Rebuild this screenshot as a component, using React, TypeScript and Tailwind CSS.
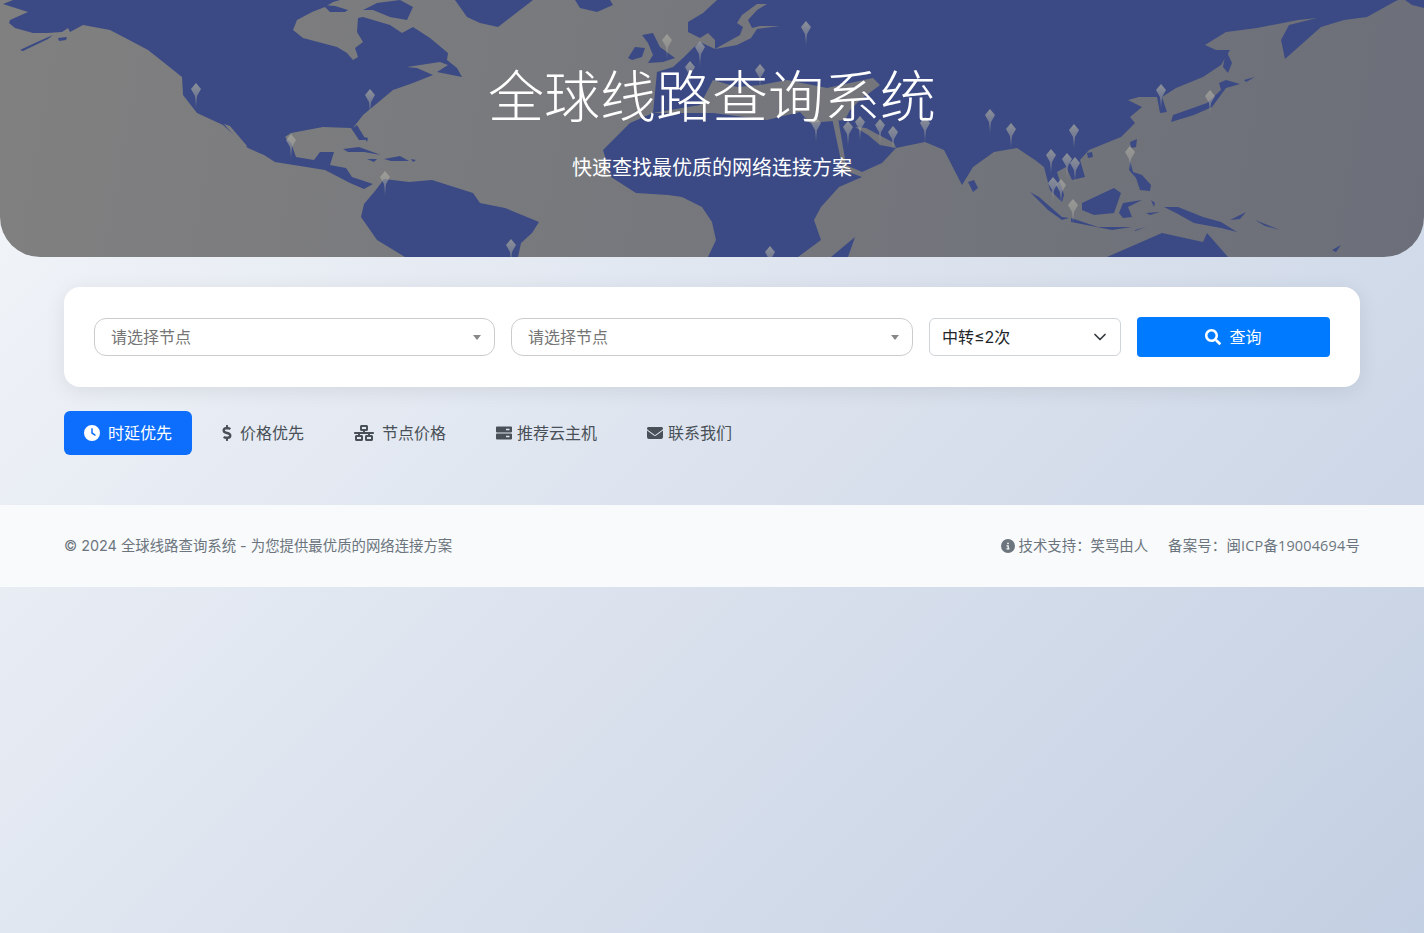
import React from 'react';
import { FaClock, FaEnvelope, FaNetworkWired, FaCircleInfo } from 'react-icons/fa6';
import { FaDollarSign, FaSearch } from 'react-icons/fa';

const pins = [
  [196, 89], [370, 95], [291, 140], [385, 177], [511, 245], [667, 40], [700, 47], [690, 67],
  [806, 27], [760, 70], [816, 123], [848, 127], [860, 122], [880, 125], [893, 132], [925, 123],
  [990, 115], [1011, 129], [1074, 130], [1051, 155], [1067, 159], [1075, 163], [1053, 183], [1061, 185],
  [1073, 205], [1130, 152], [1161, 90], [1210, 96], [770, 252],
];

// land outlines in page pixels
const land = [
  // north america
  '13,0 3,4 28,12 10,20 9,23 15,28 33,33 47,33 62,32 68,28 70,32 83,25 110,30 133,42 148,50 167,65 182,77 183,95 197,113 223,125 248,148 264,155 275,162 300,166 325,170 350,183 364,189 373,184 352,177 346,168 330,165 334,152 320,152 314,160 296,157 291,143 285,137 291,133 323,127 351,128 359,140 366,140 357,125 353,128 363,115 375,105 393,90 413,83 433,75 417,68 407,67 440,62 448,65 437,72 462,77 457,68 447,60 448,53 430,38 413,27 402,33 390,25 363,17 358,18 357,32 363,42 355,48 358,57 353,60 347,53 337,47 303,38 293,30 297,20 312,12 325,7 333,2 340,0',
  // arctic islands, alaska strip
  '363,10 377,3 400,0 413,7 407,20 390,17 373,10',
  '323,5 335,6 348,10 345,12 330,12',
  '20,50 37,42 53,35 48,39 23,51',
  '58,38 67,37 66,40 59,41',
  // greenland, iceland
  '455,0 467,17 480,23 498,27 533,0',
  '575,0 580,8 597,12 613,5 610,0',
  // south america
  '375,191 384,179 409,182 432,180 473,193 480,203 505,208 539,222 532,233 521,243 518,257 405,257 377,240 361,217 364,204',
  // caribbean
  '343,149 359,147 381,155 364,152 348,152',
  '384,159 400,156 409,161 391,161',
  '367,159 377,159 374,162',
  '411,159 416,160 413,162',
  '364,137 368,138 367,142',
  // uk and ireland
  '628,58 635,47 645,48 642,57 632,60',
  '642,35 653,33 660,47 675,58 663,62 648,63 653,55 648,43',
  // eurasia and africa
  '717,0 703,13 688,22 688,32 700,38 708,33 715,40 715,49 700,42 693,48 683,58 673,67 657,72 653,113 630,123 603,150 611,177 636,193 668,195 682,197 702,207 712,222 716,240 708,257 798,257 821,240 814,220 821,207 839,187 862,177 862,172 882,163 896,148 925,142 944,150 962,185 973,167 994,152 1017,148 1035,160 1044,167 1050,190 1062,202 1064,195 1057,172 1066,167 1072,180 1085,177 1080,160 1089,150 1121,137 1135,123 1130,117 1142,107 1128,100 1139,97 1157,97 1160,113 1167,112 1162,97 1176,88 1203,77 1221,65 1230,50 1216,50 1205,45 1226,32 1257,28 1298,20 1317,18 1289,25 1281,40 1285,59 1303,43 1321,27 1344,20 1367,17 1394,2 1398,0',
  '1405,0 1424,0 1424,8 1412,5',
  // madagascar, sri lanka, hainan, taiwan
  '831,257 855,237 848,257',
  '968,182 974,180 978,188 973,192',
  '1087,153 1092,152 1093,157 1088,158',
  '1130,142 1137,139 1136,147 1131,148',
  // japan, sakhalin, kurils
  '1171,122 1173,115 1207,103 1221,90 1219,83 1226,80 1240,84 1226,88 1212,107 1194,115',
  '1226,50 1232,63 1228,73 1223,67',
  '1244,80 1255,77 1246,82',
  // philippines
  '1130,160 1133,172 1142,175 1151,185 1150,191 1140,190 1136,178 1129,170',
  // indonesia
  '1030,192 1039,197 1062,217 1069,218 1062,220 1048,210',
  '1071,218 1098,227 1132,227 1112,230 1071,222',
  '1135,230 1146,227 1135,231',
  '1082,203 1114,188 1121,193 1114,213 1094,215 1082,210',
  '1119,213 1123,203 1142,200 1128,207 1132,217 1123,218',
  '1151,200 1155,203 1154,207',
  '1146,213 1160,212 1150,215',
  // new guinea, new britain
  '1164,207 1178,207 1203,217 1221,222 1237,232 1221,228 1194,223 1176,213',
  '1230,220 1246,212 1240,219',
  '1255,220 1280,230 1265,226',
  // australia, new zealand
  '1107,257 1162,233 1203,242 1207,233 1228,257',
  '1332,250 1341,245 1336,252',
];

// water that cuts into the land
const seas = [
  '224,124 230,126 247,146 243,146',
  '767,4 757,4 742,15 737,23 743,27 740,35 715,49 737,45 751,38 757,29 780,26 760,26 752,28 748,20 757,10',
  '653,113 670,113 713,113 767,120 800,112 810,123 845,120 850,110 860,100 880,85 873,78 827,88 787,80 760,85 737,87 713,80 700,105',
  '832,118 838,118 846,165 862,172 862,177 843,170',
  '855,127 866,128 894,143 896,148 880,145 868,135',
];

function HeroMap() {
  return (
    <svg viewBox="0 0 1424 257" className="absolute inset-0 w-full h-full">
      <defs>
        <linearGradient id="sea" gradientUnits="userSpaceOnUse" x1="0" y1="0" x2="1424" y2="257">
          <stop offset="0" stopColor="#808080" />
          <stop offset="1" stopColor="#6c6f79" />
        </linearGradient>
        <linearGradient id="pin" x1="0" y1="0" x2="0" y2="1">
          <stop offset="0" stopColor="#a8a8a0" stopOpacity="0.75" />
          <stop offset="0.5" stopColor="#a8a8a0" stopOpacity="0.5" />
          <stop offset="1" stopColor="#a8a8a0" stopOpacity="0" />
        </linearGradient>
      </defs>
      <rect width="1424" height="257" fill="url(#sea)" />
      {land.map((p, i) => (
        <polygon key={i} points={p} fill="#3b4a84" />
      ))}
      {seas.map((p, i) => (
        <polygon key={i} points={p} fill="url(#sea)" />
      ))}
      {pins.map(([x, y], i) => (
        <path
          key={i}
          d={`M${x},${y - 6} L${x + 5},${y} L${x + 1},${y + 7} L${x},${y + 21} L${x - 1},${y + 7} L${x - 5},${y} Z`}
          fill="url(#pin)"
        />
      ))}
    </svg>
  );
}

// two-row server glyph, squarer than the icon pack's
function ServerIcon() {
  return (
    <svg viewBox="0 0 16 16" className="w-4 h-4" fill="currentColor" fillRule="evenodd">
      <path d="M1 1.5h14a1 1 0 0 1 1 1v4a1 1 0 0 1-1 1H1a1 1 0 0 1-1-1v-4a1 1 0 0 1 1-1zM10 3.8v1.4h3.5V3.8zM1 8.5h14a1 1 0 0 1 1 1v4a1 1 0 0 1-1 1H1a1 1 0 0 1-1-1v-4a1 1 0 0 1 1-1zM10 10.8v1.4h3.5v-1.4z" />
    </svg>
  );
}

function NodeSelect() {
  return (
    <div className="h-[38px] mt-px bg-white border border-[#ccc] rounded-xl flex items-center justify-between pl-4 pr-[13px]">
      <span className="text-[#757575]">请选择节点</span>
      <span className="w-0 h-0 border-x-4 border-x-transparent border-t-[5px] border-t-[#888]" />
    </div>
  );
}

const tabs = [
  { label: '价格优先', icon: <FaDollarSign className="w-[10px] h-4" />, gap: 'gap-2' },
  { label: '节点价格', icon: <FaNetworkWired className="w-5 h-4" />, gap: 'gap-2' },
  { label: '推荐云主机', icon: <ServerIcon />, gap: 'gap-[5px]' },
  { label: '联系我们', icon: <FaEnvelope className="w-4 h-4" />, gap: 'gap-[5px]' },
];

export default function App() {
  return (
    <div className="min-h-[933px] bg-linear-135 from-[#f5f7fa] to-[#c3cfe2] font-['Inter','Noto_Sans_CJK_SC',sans-serif] text-base text-[#212529]">
      {/* Header */}
      <header className="relative h-[257px] rounded-b-[40px] overflow-hidden flex flex-col items-center pt-[64px] text-white">
        <HeroMap />
        <h1 className="relative text-[56px] leading-[67px] font-light mb-[22px]">全球线路查询系统</h1>
        <p className="relative text-xl leading-[30px]">快速查找最优质的网络连接方案</p>
      </header>

      <main className="px-16 pt-[30px]">
        {/* Search card */}
        <div className="h-[100px] bg-white rounded-2xl shadow-[0_4px_20px_rgba(0,0,0,0.08)] px-[30px] pt-[30px] grid grid-cols-[401px_402px_192px_193px] gap-4">
          <NodeSelect />
          <NodeSelect />
          <div className="h-[38px] mt-px bg-white border border-[#ced4da] rounded-md flex items-center justify-between pl-3 pr-3">
            <span>中转≤2次</span>
            <svg viewBox="0 0 16 16" className="w-4 h-4" fill="none" stroke="#343a40" strokeWidth="1.7" strokeLinecap="round" strokeLinejoin="round">
              <path d="M3 5.5l5 5 5-5" />
            </svg>
          </div>
          <button className="h-10 bg-[#007bff] rounded text-white flex items-center justify-center gap-2">
            <FaSearch className="w-4 h-4" />
            查询
          </button>
        </div>

        {/* Tabs */}
        <nav className="flex gap-[10px] mt-6 text-[#495057]">
          <a className="h-11 px-5 bg-[#0d6efd] rounded-md text-white flex items-center gap-2">
            <FaClock className="w-4 h-4" />
            时延优先
          </a>
          {tabs.map((t) => (
            <a key={t.label} className={`h-11 px-5 flex items-center ${t.gap}`}>
              {t.icon}
              {t.label}
            </a>
          ))}
        </nav>
      </main>

      {/* Footer */}
      <footer className="mt-[50px] h-[82px] bg-[#f8fafc] px-16 flex items-center justify-between text-[14.4px] text-[#6c757d]">
        <span>© 2024 全球线路查询系统 - 为您提供最优质的网络连接方案</span>
        <div className="flex items-center gap-5 font-['Open_Sans','Noto_Sans_CJK_SC',sans-serif]">
          <span className="flex items-center gap-1">
            <FaCircleInfo className="w-[14px] h-[14px]" />
            技术支持：笑骂由人
          </span>
          <span className="tracking-[0.2px]">备案号：闽ICP备19004694号</span>
        </div>
      </footer>
    </div>
  );
}
